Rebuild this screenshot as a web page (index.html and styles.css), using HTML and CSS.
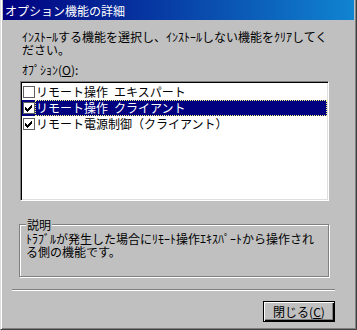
FILE: index.html
```html
<!DOCTYPE html>
<html lang="ja">
<head>
<meta charset="utf-8">
<link rel="stylesheet" href="styles.css">
</head>
<body>
<div class="window">
  <div class="titlebar">オプション機能の詳細</div>
  <div class="content">
    <p class="intro">ｲﾝｽﾄｰﾙする機能を選択し、ｲﾝｽﾄｰﾙしない機能をｸﾘｱしてください。</p>
    <div class="label">ｵﾌﾟｼｮﾝ(<u>O</u>):</div>
    <div class="listbox">
      <div class="row">
        <span class="check"></span>
        <span class="item">リモート操作&#8194;エキスパート</span>
      </div>
      <div class="row selected">
        <span class="check"><svg width="10" height="10" viewBox="0 0 10 10" shape-rendering="crispEdges"><path d="M1 4h1v1h1v1h1v-1h1v-1h1v-1h1v-1h1v3h-1v1h-1v1h-1v1h-1v1h-1v-1h-1v-1h-1z" fill="#000"/></svg></span>
        <span class="item">リモート操作&#8194;クライアント</span>
      </div>
      <div class="row">
        <span class="check"><svg width="10" height="10" viewBox="0 0 10 10" shape-rendering="crispEdges"><path d="M1 4h1v1h1v1h1v-1h1v-1h1v-1h1v-1h1v3h-1v1h-1v1h-1v1h-1v1h-1v-1h-1v-1h-1z" fill="#000"/></svg></span>
        <span class="item">リモート電源制御（クライアント）</span>
      </div>
    </div>
    <fieldset class="group">
      <legend class="group-label">説明</legend>
      <p class="desc">ﾄﾗﾌﾞﾙが発生した場合にﾘﾓｰﾄ操作ｴｷｽﾊﾟｰﾄから操作される側の機能です。</p>
    </fieldset>
    <div class="separator"></div>
    <div class="footer">
      <button class="btn default">閉じる(<u>C</u>)</button>
    </div>
  </div>
</div>
</body>
</html>
```
FILE: styles.css
```css
html, body {
  margin: 0;
  padding: 0;
}
body {
  width: 357px;
  height: 330px;
  overflow: hidden;
  background: #c0c0c0;
  font-family: "Noto Sans CJK JP", sans-serif;
  font-size: 12px;
  color: #000;
}
.window {
  box-sizing: border-box;
  width: 357px;
  height: 330px;
  background: #c0c0c0;
  border-style: solid;
  border-width: 0 1px 1px 1px;
  border-color: transparent #404040 #404040 #dfdfdf;
  box-shadow: inset 1px 0 #fff, inset -1px -1px #808080;
  padding: 0 2px 2px 2px;
  display: flex;
  flex-direction: column;
}
.titlebar {
  height: 20px;
  box-sizing: border-box;
  padding: 4px 0 0 2px;
  line-height: 13px;
  color: #fff;
  background: linear-gradient(to right, #000080, #1084d0);
  white-space: nowrap;
}
.content {
  display: flex;
  flex-direction: column;
  padding: 0;
}
.intro {
  margin: 10px 19px 0 19px;
  line-height: 13px;
}
.label {
  margin: 7px 0 0 19px;
  line-height: 13px;
}
.listbox {
  margin: 5px 25px 0 17px;
  height: 120px;
  box-sizing: border-box;
  background: #fff;
  border: 1px solid;
  border-color: #808080 #fff #fff #808080;
  box-shadow: inset 1px 1px #000, inset -1px -1px #dfdfdf;
  padding: 2px 1px 0 1px;
}
.row {
  display: flex;
  align-items: center;
  height: 16px;
}
.row.selected {
  background: #000080;
  color: #fff;
}
.check {
  box-sizing: border-box;
  width: 12px;
  height: 12px;
  margin-left: 1px;
  background: #fff;
  border: 1px solid #606060;
  display: flex;
  align-items: center;
  justify-content: center;
  flex: none;
}
.check svg {
  display: block;
}
.item {
  flex: 1;
  box-sizing: border-box;
  height: 16px;
  line-height: 14px;
  border: 1px solid transparent;
  white-space: nowrap;
}
.row.selected .item {
  border: 1px dotted #ffff80;
}
.group {
  margin: 17px 25px 0 16px;
  padding: 0 6px 18px 6px;
  border: 1px solid #808080;
  box-shadow: inset 1px 1px #fff, 1px 1px #fff;
  min-width: 0;
}
.group-label {
  padding: 0 1px;
  margin: 0;
  line-height: 13px;
  background: #c0c0c0;
}
.desc {
  margin: 1px 0 0 0;
  line-height: 13px;
}
.separator {
  margin: 12px 19px 0 9px;
  height: 1px;
  background: #808080;
  border-bottom: 1px solid #fff;
}
.footer {
  display: flex;
  justify-content: flex-end;
  margin: 10px 19px 0 0;
}
.btn {
  box-sizing: border-box;
  width: 72px;
  height: 21px;
  padding: 0;
  margin: 0;
  font-family: "Noto Sans CJK JP", sans-serif;
  font-size: 12px;
  line-height: 13px;
  color: #000;
  background: #c0c0c0;
  border: 1px solid #000;
  box-shadow: inset 1px 1px #fff, inset -1px -1px #000, inset -2px -2px #808080;
}
```
